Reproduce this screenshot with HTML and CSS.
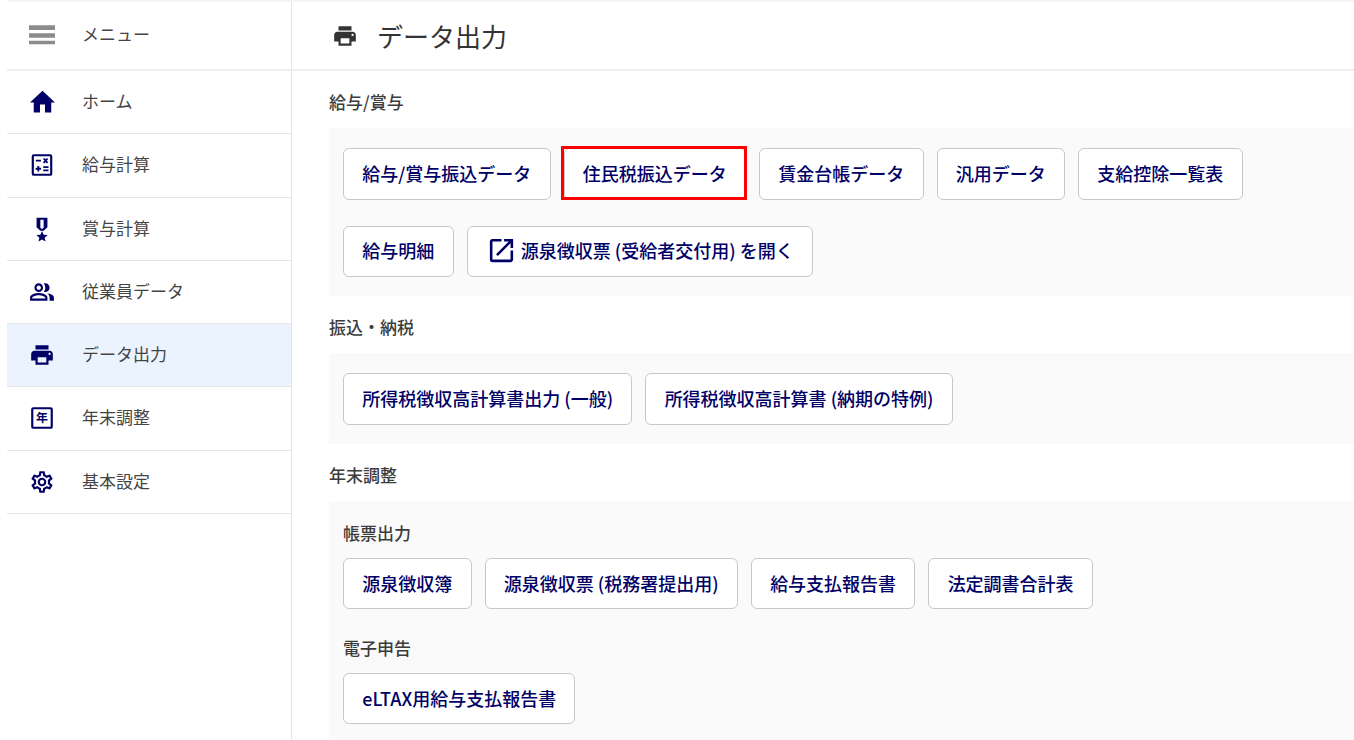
FILE: index.html
```html
<!DOCTYPE html>
<html lang="ja">
<head>
<meta charset="utf-8">
<title>データ出力</title>
<link rel="stylesheet" href="styles.css">
</head>
<body>
<div class="topstrip"></div>
<div class="app">
  <nav class="sidebar">
    <div class="nav-row menu-row">
      <svg class="nav-icon grey" viewBox="0 0 26 26"><path d="M0 4.300h26V9H0zM0 12.300h26v4.400H0zM0 19.700h26v3.600H0z"/></svg>
      <span>メニュー</span>
    </div>
    <a class="nav-row">
      <svg class="nav-icon" viewBox="0 0 24 24"><path d="M10 20.500v-6.500h4v6.500h5v-8h3L12 3 2 12.500h3v8z" transform="translate(-1.400 -1.960) scale(1.154)"/></svg>
      <span>ホーム</span>
    </a>
    <a class="nav-row">
      <svg class="nav-icon" viewBox="0 0 24 24"><path fill-rule="evenodd" d="M4.500 2h15a2 2 0 0 1 2 2v16a2 2 0 0 1-2 2h-15a2 2 0 0 1-2-2V4a2 2 0 0 1 2-2zm0 2v16h15V4h-15z"/><path class="calc-marks" d="M6.300 8h4.700M13.500 6l3.600 4M17.100 6l-3.600 4M8.600 13v5M6.100 15.500h5M13.200 14h4.800M13.200 17h4.800"/></svg>
      <span>給与計算</span>
    </a>
    <a class="nav-row">
      <svg class="nav-icon" viewBox="0 0 24 24"><path d="M7 1.500h10v8.800l-3.400 3.200h-3.200L7 10.300zM10.500 3.500v7.300l1.500 1.200 1.500-1.200V3.500z" fill-rule="evenodd"/><path d="M12 13.800l1.500 3.500 3.700.3-2.800 2.400.9 3.500-3.300-1.900-3.300 1.900.9-3.500-2.800-2.400 3.700-.3z"/></svg>
      <span>賞与計算</span>
    </a>
    <a class="nav-row">
      <svg class="nav-icon" viewBox="0 0 24 24"><path d="M16.670 13.130C18.040 14.060 19 15.320 19 17v3h4v-3c0-2.180-3.570-3.470-6.330-3.870zM15 12c2.210 0 4-1.790 4-4s-1.790-4-4-4c-.47 0-.91.100-1.330.240C14.500 5.270 15 6.580 15 8s-.5 2.730-1.330 3.760c.42.140.86.240 1.330.240zM9 12c2.210 0 4-1.790 4-4s-1.790-4-4-4-4 1.790-4 4 1.790 4 4 4zm0-6c1.100 0 2 .9 2 2s-.9 2-2 2-2-.9-2-2 .9-2 2-2zM9 13c-2.670 0-8 1.340-8 4v3h16v-3c0-2.660-5.330-4-8-4zm6 5H3v-.990C3.200 16.290 6.300 15 9 15s5.800 1.290 6 2z"/></svg>
      <span>従業員データ</span>
    </a>
    <a class="nav-row active">
      <svg class="nav-icon" viewBox="0 0 24 24"><path d="M19 8H5c-1.660 0-3 1.340-3 3v6h4v4h12v-4h4v-6c0-1.660-1.340-3-3-3zm-3 11H8v-5h8v5zm3-7c-.55 0-1-.45-1-1s.45-1 1-1 1 .45 1 1-.45 1-1 1zm-1-9H6v4h12V3z"/></svg>
      <span>データ出力</span>
    </a>
    <a class="nav-row">
      <svg class="nav-icon" viewBox="0 0 24 24"><path fill-rule="evenodd" d="M4 2h16a2 2 0 0 1 2 2v16a2 2 0 0 1-2 2H4a2 2 0 0 1-2-2V4a2 2 0 0 1 2-2zm0 2v16h16V4H4z"/><text class="nen" x="12" y="16">年</text></svg>
      <span>年末調整</span>
    </a>
    <a class="nav-row">
      <svg class="nav-icon" viewBox="0 0 24 24"><path d="M19.430 12.980c.04-.32.070-.64.070-.98 0-.34-.03-.66-.07-.98l2.110-1.650c.19-.15.240-.42.120-.64l-2-3.460c-.09-.16-.26-.25-.44-.25-.06 0-.12.010-.17.030l-2.490 1c-.52-.4-1.080-.73-1.690-.98l-.38-2.650C14.460 2.180 14.250 2 14 2h-4c-.25 0-.46.180-.49.420l-.38 2.650c-.61.250-1.170.590-1.690.98l-2.490-1c-.06-.02-.12-.03-.18-.03-.17 0-.34.090-.43.250l-2 3.460c-.13.220-.07.490.12.640l2.110 1.650c-.04.320-.07.650-.07.980 0 .33.030.66.070.98l-2.110 1.650c-.19.150-.24.420-.12.640l2 3.460c.09.160.26.250.44.250.06 0 .12-.01.170-.03l2.490-1c.52.400 1.080.730 1.690.980l.38 2.650c.03.240.24.420.49.420h4c.25 0 .46-.18.490-.42l.38-2.650c.61-.25 1.170-.59 1.690-.98l2.490 1c.06.020.12.030.18.030.17 0 .34-.09.430-.25l2-3.460c.12-.22.070-.49-.12-.64l-2.110-1.650zm-1.980-1.710c.04.310.05.520.05.730 0 .21-.02.430-.05.730l-.14 1.130.89.700 1.080.840-.7 1.210-1.270-.51-1.040-.42-.9.680c-.43.320-.84.560-1.250.730l-1.060.43-.16 1.130-.2 1.350h-1.400l-.19-1.350-.16-1.130-1.060-.43c-.43-.18-.83-.41-1.230-.71l-.91-.7-1.060.43-1.270.51-.7-1.210 1.080-.84.890-.7-.14-1.130c-.03-.31-.05-.54-.05-.74s.02-.43.05-.73l.14-1.130-.89-.7-1.080-.84.7-1.210 1.270.51 1.040.42.900-.68c.43-.32.840-.56 1.250-.73l1.060-.43.160-1.130.2-1.350h1.390l.19 1.350.16 1.130 1.060.43c.43.180.83.410 1.230.71l.91.700 1.060-.43 1.270-.51.7 1.210-1.070.85-.89.7.14 1.130zM12 8c-2.210 0-4 1.790-4 4s1.790 4 4 4 4-1.790 4-4-1.790-4-4-4zm0 6c-1.100 0-2-.9-2-2s.9-2 2-2 2 .9 2 2-.9 2-2 2z"/></svg>
      <span>基本設定</span>
    </a>
  </nav>
  <main class="main">
    <header class="page-head">
      <svg class="head-icon" viewBox="0 0 24 24"><path d="M19 8H5c-1.660 0-3 1.340-3 3v6h4v4h12v-4h4v-6c0-1.660-1.340-3-3-3zm-3 11H8v-5h8v5zm3-7c-.55 0-1-.45-1-1s.45-1 1-1 1 .45 1 1-.45 1-1 1zm-1-9H6v4h12V3z"/></svg>
      <h1>データ出力</h1>
    </header>
    <div class="content">
      <h2>給与/賞与</h2>
      <section class="panel">
        <div class="btn-row">
          <a class="btn">給与/賞与振込データ</a>
          <a class="btn highlight">住民税振込データ</a>
          <a class="btn">賃金台帳データ</a>
          <a class="btn">汎用データ</a>
          <a class="btn">支給控除一覧表</a>
          <a class="btn">給与明細</a>
          <a class="btn">
            <svg class="btn-icon" viewBox="0 0 24 24"><path d="M19 19H5V5h7V3H5a2 2 0 0 0-2 2v14a2 2 0 0 0 2 2h14c1.100 0 2-.9 2-2v-7h-2v7zM14 3v2h3.590l-9.830 9.830 1.410 1.410L19 6.410V10h2V3h-7z"/></svg>
            源泉徴収票 (受給者交付用) を開く
          </a>
        </div>
      </section>
      <h2>振込・納税</h2>
      <section class="panel">
        <div class="btn-row">
          <a class="btn">所得税徴収高計算書出力 (一般)</a>
          <a class="btn">所得税徴収高計算書 (納期の特例)</a>
        </div>
      </section>
      <h2>年末調整</h2>
      <section class="panel last">
        <h3>帳票出力</h3>
        <div class="btn-row">
          <a class="btn">源泉徴収簿</a>
          <a class="btn">源泉徴収票 (税務署提出用)</a>
          <a class="btn">給与支払報告書</a>
          <a class="btn">法定調書合計表</a>
        </div>
        <h3 class="second">電子申告</h3>
        <div class="btn-row">
          <a class="btn">eLTAX用給与支払報告書</a>
        </div>
      </section>
    </div>
  </main>
</div>
</body>
</html>
```

FILE: styles.css
```css
* { box-sizing: border-box; }
html, body { margin: 0; height: 740px; overflow: hidden; background: #fff; }
body {
  font-family: "Noto Sans CJK JP", "Noto Sans", sans-serif;
  color: #3c3c3c;
  padding-left: 7px;
}
.topstrip { height: 2px; background: #f5f5f5; }
.app { display: flex; height: 738px; }
.sidebar { width: 285px; flex: none; border-right: 1px solid #e6e6e6; }
.nav-row {
  display: flex;
  align-items: center;
  height: 63.25px;
  padding-left: 22px;
  gap: 27px;
  font-size: 17px;
  border-bottom: 1px solid #e6e6e6;
  color: #444;
}
.nav-row span { padding-bottom: 3px; }
.menu-row { height: 69px; border-bottom-width: 2px; border-bottom-color: #eee; padding-bottom: 3px; }
.menu-row span { padding-bottom: 2px; }
.active { background: #ebf3fe; }
.nav-icon { width: 26px; height: 26px; fill: #000066; flex: none; }
.nav-icon.grey { fill: #8c8c8c; }
.calc-marks { fill: none; stroke: #000066; stroke-width: 1.700; }
.nen { font-size: 11px; font-weight: 700; text-anchor: middle; }
.main { flex: 1; min-width: 0; }
.page-head {
  display: flex;
  align-items: center;
  height: 69px;
  padding-left: 40px;
  gap: 19px;
  border-bottom: 2px solid #eee;
}
.head-icon { width: 26px; height: 26px; fill: #333; flex: none; }
h1 { margin: 0; padding-top: 1px; font-size: 26px; font-weight: 400; color: #333; line-height: 1; }
.content { padding-left: 37px; }
h2 { margin: 0; height: 57px; padding-top: 19px; font-size: 17px; line-height: 24px; font-weight: 500; color: #3c3c3c; }
.panel { background: #fafafa; padding: 20px 14px 19px; }
.last { padding-top: 20px; height: 239px; }
h3 { margin: 0 0 13px; font-size: 17px; line-height: 24px; font-weight: 500; color: #3c3c3c; }
h3.second { margin-top: 26.5px; }
.btn-row { display: flex; flex-wrap: wrap; gap: 26px 13px; }
.btn {
  display: flex;
  align-items: center;
  position: relative;
  height: 51.6px;
  padding: 0 18.25px 2px;
  background: #fff;
  border: 1px solid #c8c8c8;
  border-radius: 6px;
  font-size: 18px;
  font-weight: 500;
  color: #000066;
  white-space: nowrap;
}
.btn-icon { width: 31px; height: 31px; fill: #000066; margin-right: 4px; flex: none; }
.highlight::after {
  content: "";
  position: absolute;
  inset: -3px -2px -1px -4px;
  border: 3px solid #f00;
}
```
